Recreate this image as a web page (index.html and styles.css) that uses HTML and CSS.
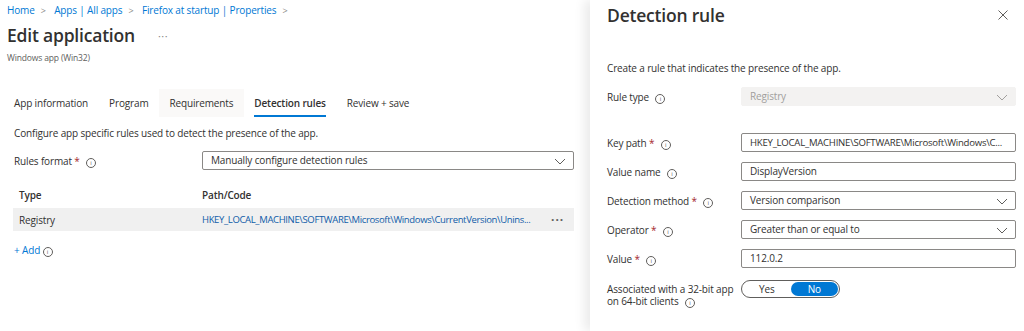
FILE: index.html
```html
<!DOCTYPE html>
<html lang="en">
<head>
    <meta charset="UTF-8">
    <title>Edit application</title>
    <link rel="stylesheet" href="styles.css">
</head>
<body>
    <div class="page">
        <div class="main">
            <div class="breadcrumb">
                <a>Home</a><span class="sep">&gt;</span>
                <a>Apps | All apps</a><span class="sep">&gt;</span>
                <a>Firefox at startup | Properties</a><span class="sep">&gt;</span>
            </div>
            <div class="title-row">
                <h1>Edit application</h1>
                <span class="more">···</span>
            </div>
            <div class="subtitle">Windows app (Win32)</div>

            <div class="content">
                <div class="tabs">
                    <div class="tab">App information</div>
                    <div class="tab">Program</div>
                    <div class="tab hover">Requirements</div>
                    <div class="tab active">Detection rules</div>
                    <div class="tab">Review + save</div>
                </div>

                <p class="desc">Configure app specific rules used to detect the presence of the app.</p>

                <div class="field-row">
                    <div class="label">Rules format <span class="req">*</span> <span class="info">i</span></div>
                    <div class="select wide">Manually configure detection rules
                        <svg class="chev" width="12" height="7" viewBox="0 0 12 7"><polyline points="1,1 6,6 11,1" fill="none" stroke="#605e5c" stroke-width="1"/></svg>
                    </div>
                </div>

                <div class="grid-head">
                    <div class="col-type">Type</div>
                    <div class="col-path">Path/Code</div>
                </div>
                <div class="grid-row">
                    <div class="col-type">Registry</div>
                    <div class="col-path link">HKEY_LOCAL_MACHINE\SOFTWARE\Microsoft\Windows\CurrentVersion\Unins...</div>
                    <div class="row-more">···</div>
                </div>

                <div class="add"><span>+ Add</span> <span class="info blue">i</span></div>
            </div>
        </div>

        <div class="panel">
            <div class="panel-head">
                <h2>Detection rule</h2>
                <svg class="close" width="10" height="10" viewBox="0 0 10 10"><path d="M0.5 0.5 L9.5 9.5 M9.5 0.5 L0.5 9.5" stroke="#605e5c" stroke-width="1"/></svg>
            </div>
            <p class="panel-desc">Create a rule that indicates the presence of the app.</p>

            <div class="form">
                <div class="form-row">
                    <div class="label">Rule type <span class="info">i</span></div>
                    <div class="select disabled">Registry
                        <svg class="chev" width="12" height="7" viewBox="0 0 12 7"><polyline points="1,1 6,6 11,1" fill="none" stroke="#a19f9d" stroke-width="1"/></svg>
                    </div>
                </div>
                <div class="form-row gap-big">
                    <div class="label">Key path <span class="req">*</span> <span class="info">i</span></div>
                    <div class="input narrow">HKEY_LOCAL_MACHINE\SOFTWARE\Microsoft\Windows\C...</div>
                </div>
                <div class="form-row">
                    <div class="label">Value name <span class="info">i</span></div>
                    <div class="input">DisplayVersion</div>
                </div>
                <div class="form-row">
                    <div class="label">Detection method <span class="req">*</span> <span class="info">i</span></div>
                    <div class="select">Version comparison
                        <svg class="chev" width="12" height="7" viewBox="0 0 12 7"><polyline points="1,1 6,6 11,1" fill="none" stroke="#605e5c" stroke-width="1"/></svg>
                    </div>
                </div>
                <div class="form-row">
                    <div class="label">Operator <span class="req">*</span> <span class="info">i</span></div>
                    <div class="select">Greater than or equal to
                        <svg class="chev" width="12" height="7" viewBox="0 0 12 7"><polyline points="1,1 6,6 11,1" fill="none" stroke="#605e5c" stroke-width="1"/></svg>
                    </div>
                </div>
                <div class="form-row">
                    <div class="label">Value <span class="req">*</span> <span class="info">i</span></div>
                    <div class="input">112.0.2</div>
                </div>
                <div class="form-row top">
                    <div class="label two-line">Associated with a 32-bit app<br>on 64-bit clients <span class="info">i</span></div>
                    <div class="toggle">
                        <span class="opt">Yes</span>
                        <span class="opt on">No</span>
                    </div>
                </div>
            </div>
        </div>
    </div>
</body>
</html>
```

FILE: styles.css
```css
body {
    margin: 0;
    font-family: "Open Sans", "Noto Sans", sans-serif;
    font-size: 10px;
    letter-spacing: -0.15px;
    color: #323130;
    background: #fff;
}
.page {
    display: flex;
    height: 331px;
    overflow: hidden;
}
.main {
    width: 590px;
    flex: none;
}
.breadcrumb {
    padding: 2px 0 0 7px;
    height: 16px;
    line-height: 16px;
    color: #0078d4;
}
.breadcrumb .sep {
    color: #8a8886;
    margin: 0 6px;
    font-size: 9px;
}
.title-row {
    display: flex;
    align-items: center;
    padding-left: 7px;
    height: 34px;
}
h1 {
    margin: 0;
    font-size: 17.5px;
    font-weight: 600;
    letter-spacing: -0.2px;
}
.more {
    margin-left: 23px;
    color: #8a8886;
    font-size: 11px;
    letter-spacing: 0.5px;
}
.subtitle {
    padding-left: 7px;
    font-size: 8.5px;
    color: #605e5c;
    line-height: 11px;
}
.content {
    padding: 0 16px 0 13px;
}
.tabs {
    display: flex;
    margin-top: 26px;
    height: 28px;
}
.tab {
    padding: 0 10.5px;
    line-height: 28px;
    position: relative;
}
.tab:first-child {
    padding-left: 1px;
}
.tab.hover {
    background: #faf9f8;
}
.tab.active {
    font-weight: 600;
}
.tab.active::after {
    content: "";
    position: absolute;
    left: 10.5px;
    right: 10.5px;
    bottom: 0;
    height: 2px;
    background: #0078d4;
}
.desc {
    margin: 9px 0 0 1px;
    line-height: 14px;
}
.field-row {
    display: flex;
    align-items: center;
    margin-top: 11px;
}
.field-row .label {
    width: 188px;
    padding-left: 1px;
}
.req {
    color: #a4262c;
}
.info {
    display: inline-block;
    width: 8px;
    height: 8px;
    border: 1px solid #605e5c;
    border-radius: 50%;
    font-size: 6px;
    line-height: 8px;
    text-align: center;
    color: #605e5c;
    margin-left: 4px;
    letter-spacing: 0;
}
.info.blue {
    margin-left: 0;
}
.select, .input {
    position: relative;
    height: 17px;
    line-height: 17px;
    border: 1px solid #8a8886;
    border-radius: 2px;
    padding: 0 26px 0 8px;
    white-space: nowrap;
    flex: 1;
    min-width: 0;
}
.input {
    padding-right: 6px;
}
.input.narrow {
    font-size: 9.6px;
    letter-spacing: -0.25px;
}
.select .chev {
    position: absolute;
    right: 7px;
    top: 6px;
}
.select.wide {
    flex: none;
    width: 336px;
}
.select.disabled {
    background: #f3f2f1;
    border-color: #f3f2f1;
    color: #a19f9d;
}
.grid-head, .grid-row {
    display: flex;
    align-items: center;
    padding-left: 6px;
}
.grid-head {
    margin-top: 13px;
    height: 24px;
    font-weight: 600;
}
.grid-row {
    height: 23px;
    background: #f0f0f0;
    margin-top: 1px;
}
.col-type {
    width: 183px;
    flex: none;
}
.col-path {
    width: 349px;
    flex: none;
    white-space: nowrap;
    overflow: hidden;
}
.grid-row .col-path {
    font-size: 9.5px;
    letter-spacing: -0.35px;
}
.link {
    color: #0f5ca8;
}
.row-more {
    font-size: 12px;
    font-weight: 700;
    letter-spacing: 1px;
    color: #605e5c;
}
.add {
    margin-top: 12px;
    color: #0078d4;
    padding-left: 1px;
}
.panel {
    width: 434px;
    flex: none;
    box-shadow: -6px 0 10px rgba(0, 0, 0, 0.08);
    padding: 0 0 0 17px;
    box-sizing: border-box;
}
.panel-head {
    display: flex;
    align-items: center;
    justify-content: space-between;
    height: 30px;
    padding-right: 16px;
}
h2 {
    margin: 0;
    font-size: 17.5px;
    font-weight: 600;
    letter-spacing: -0.2px;
}
.panel-desc {
    margin: 31px 0 0;
    line-height: 14px;
}
.form {
    padding-right: 8px;
}
.form-row {
    display: flex;
    align-items: center;
    margin-top: 10px;
}
.form-row:first-child {
    margin-top: 12px;
}
.form-row.gap-big {
    margin-top: 27px;
}
.form-row.top {
    align-items: flex-start;
    margin-top: 12px;
}
.form-row .label {
    width: 134px;
    flex: none;
    white-space: nowrap;
}
.label.two-line {
    line-height: 12px;
    padding-top: 3px;
}
.toggle {
    display: flex;
    width: 99px;
    height: 18px;
    border: 1px solid #605e5c;
    border-radius: 10px;
    padding: 1px;
    box-sizing: border-box;
}
.toggle .opt {
    flex: 1;
    text-align: center;
    line-height: 14px;
    border-radius: 8px;
}
.toggle .opt.on {
    background: #0078d4;
    color: #fff;
}
```
